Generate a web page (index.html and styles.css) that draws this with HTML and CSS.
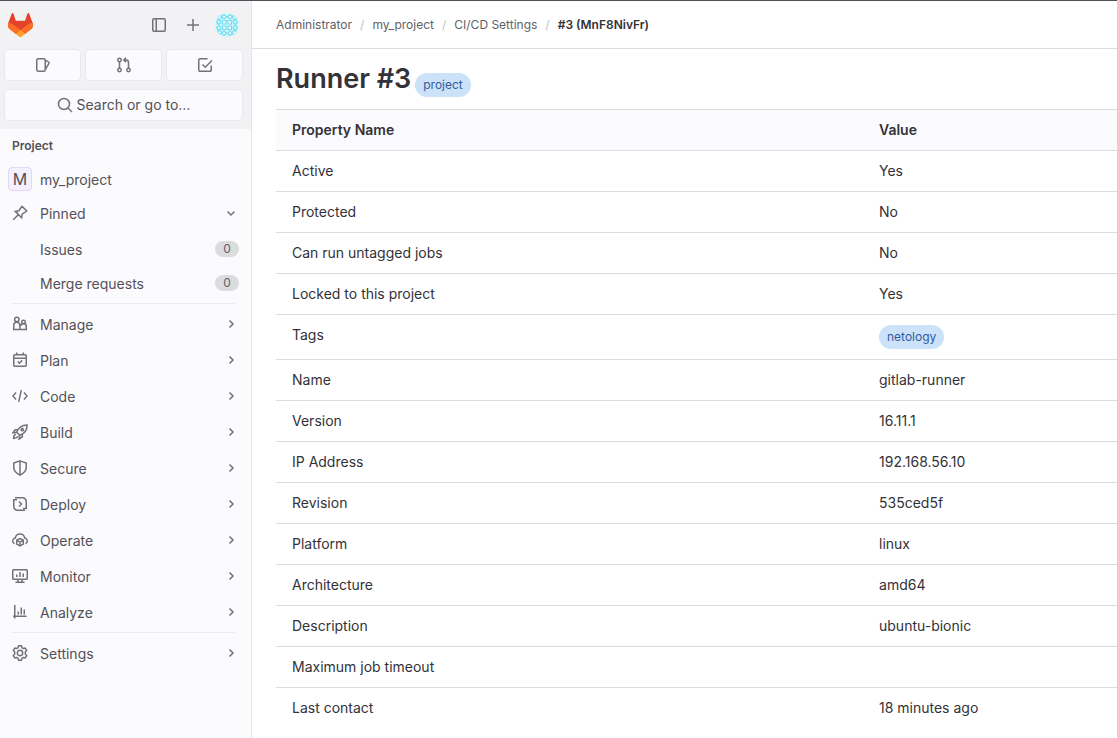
FILE: index.html
```html
<!DOCTYPE html>
<html lang="en">
<head>
<meta charset="utf-8">
<meta name="viewport" content="width=device-width, initial-scale=1">
<title>#3 (MnF8NivFr) · CI/CD Settings · GitLab</title>
<link rel="stylesheet" href="styles.css">
</head>
<body>
<svg class="sprite" aria-hidden="true">
  <symbol id="chevron" viewBox="0 0 16 16"><path d="M6.500 4.500 10 8l-3.500 3.500"/></symbol>
  <symbol id="chevron-down" viewBox="0 0 16 16"><path d="M4.500 6.500 8 10l3.500-3.500"/></symbol>
</svg>
<div class="layout">
  <aside class="sidebar">
    <div class="user-bar">
      <div class="brand-row">
        <a class="logo" href="#" aria-label="Homepage">
          <svg viewBox="0 0 25 24"><path fill="#e24329" d="m24.507 9.500-.034-.09L21.082.562a.896.896 0 0 0-1.694.091l-2.290 7.010H7.825L5.535.653a.898.898 0 0 0-1.694-.09L.451 9.411.416 9.500a6.297 6.297 0 0 0 2.090 7.278l.012.010.030.022 5.160 3.867 2.560 1.935 1.554 1.176a1.051 1.051 0 0 0 1.268 0l1.555-1.176 2.560-1.935 5.197-3.890.014-.010A6.297 6.297 0 0 0 24.507 9.500Z"/><path fill="#fc6d26" d="m24.507 9.500-.034-.09a11.440 11.440 0 0 0-4.560 2.051l-7.447 5.632 4.742 3.584 5.197-3.890.014-.010A6.297 6.297 0 0 0 24.507 9.500Z"/><path fill="#fca326" d="m7.707 20.677 2.560 1.935 1.555 1.176a1.051 1.051 0 0 0 1.268 0l1.555-1.176 2.560-1.935-4.743-3.584-4.755 3.584Z"/><path fill="#fc6d26" d="M5.010 11.461a11.430 11.430 0 0 0-4.560-2.050L.416 9.500a6.297 6.297 0 0 0 2.090 7.278l.012.010.030.022 5.160 3.867 4.745-3.584-7.444-5.632Z"/></svg>
        </a>
        <div class="brand-actions">
          <button type="button" class="plain" aria-label="Hide sidebar"><svg class="icon" viewBox="0 0 16 16"><rect x="1.750" y="1.750" width="12.500" height="12.500" rx="1.200"/><path d="M5.250 2v12"/></svg></button>
          <button type="button" class="plain" aria-label="Create new"><svg class="icon" viewBox="0 0 16 16"><path d="M8 2v12M2 8h12"/></svg></button>
          <button type="button" class="plain" aria-label="User menu">
            <svg class="user-avatar" viewBox="0 0 24 24">
              <defs><clipPath id="round"><circle cx="12" cy="12" r="12"/></clipPath></defs>
              <g clip-path="url(#round)">
                <path fill="#d3f5fa" d="M0 0h24v24H0z"/>
                <g fill="#f4fdfe" stroke="#72def0" stroke-width="1.200">
                  <path d="M7.500 7.500h3.500v3.500H7.500zM13 7.500h3.500v3.500H13zM7.500 13h3.500v3.500H7.500zM13 13h3.500v3.500H13z"/>
                  <path d="m9 1.500 2.500 2.250L9 6 6.500 3.750zM15 1.500l2.500 2.250L15 6l-2.500-2.250zM9 18l2.500 2.250L9 22.500l-2.500-2.250zM15 18l2.500 2.250L15 22.500l-2.500-2.250zM1.500 9l2.250-2.500L6 9l-2.250 2.500zM1.500 15l2.250-2.500L6 15l-2.250 2.500zM18 9l2.250-2.500L22.500 9l-2.250 2.500zM18 15l2.250-2.500L22.500 15l-2.250 2.500z"/>
                  <circle cx="4.500" cy="4.500" r="1.800"/><circle cx="19.500" cy="4.500" r="1.800"/><circle cx="4.500" cy="19.500" r="1.800"/><circle cx="19.500" cy="19.500" r="1.800"/>
                </g>
              </g>
            </svg>
          </button>
        </div>
      </div>
      <div class="counters">
        <a href="#" class="tile" aria-label="Assigned issues"><svg class="icon" viewBox="0 0 16 16"><rect x="1.750" y="1.750" width="8.500" height="12.500" rx="1.500"/><path d="m10.500 3.500 2.600 1.100c.8.300 1.100 1.100.8 1.800l-3.500 6.100"/></svg></a>
        <a href="#" class="tile" aria-label="Merge requests"><svg class="icon" viewBox="0 0 16 16"><circle cx="3.500" cy="3" r="1.700"/><circle cx="3.500" cy="13" r="1.700"/><circle cx="12.500" cy="13" r="1.700"/><path d="M3.500 4.700v6.600M12.500 11.300V5.500a2.500 2.500 0 0 0-2.500-2.500H8M10 .8 7.800 3 10 5.200"/></svg></a>
        <a href="#" class="tile" aria-label="To-Do List"><svg class="icon" viewBox="0 0 16 16"><path d="M10.500 1.750H3A1.250 1.250 0 0 0 1.750 3v10A1.250 1.250 0 0 0 3 14.250h10A1.250 1.250 0 0 0 14.250 13V8.500M5.500 7.500 8.250 10.250 15 3.500"/></svg></a>
      </div>
      <button type="button" class="tile search"><svg class="icon" viewBox="0 0 16 16"><circle cx="7" cy="7" r="5.500"/><path d="m11 11 4 4"/></svg>Search or go to…</button>
    </div>

    <nav class="nav" aria-label="Project navigation">
      <h2 class="nav-title">Project</h2>
      <div class="group compact">
        <a href="#" class="item"><span class="project-avatar">M</span><span class="label">my_project</span></a>
        <button type="button" class="item"><svg class="icon" viewBox="0 0 16 16"><path d="M10 1.300 14.700 6 12 8l-1.800 1.100-.6 3.600-6.300-6.300 3.600-.6L8 4ZM6.300 9.700 1.200 14.800"/></svg><span class="label">Pinned</span><svg class="icon chevron"><use href="#chevron-down"/></svg></button>
      </div>
      <div class="group compact">
        <a href="#" class="item"><span class="icon"></span><span class="label">Issues</span><span class="count">0</span></a>
        <a href="#" class="item"><span class="icon"></span><span class="label">Merge requests</span><span class="count">0</span></a>
      </div>
      <div class="group ruled">
        <button type="button" class="item"><svg class="icon" viewBox="0 0 16 16"><circle cx="4.800" cy="3.500" r="2.200"/><circle cx="11.500" cy="6" r="1.800"/><path d="M8 13.500H1.750V9.300a3 3 0 0 1 6 0ZM8 13.500h6.250v-3a2.700 2.700 0 0 0-5.400-.5"/></svg><span class="label">Manage</span><svg class="icon chevron"><use href="#chevron"/></svg></button>
        <button type="button" class="item"><svg class="icon" viewBox="0 0 16 16"><rect x="1.750" y="2.750" width="12.500" height="11.500" rx="1"/><path d="M2 6.250h12M4.750.5v2M11.250.5v2M5.700 9.500l1.700 1.700 2.800-2.800"/></svg><span class="label">Plan</span><svg class="icon chevron"><use href="#chevron"/></svg></button>
        <button type="button" class="item"><svg class="icon" viewBox="0 0 16 16"><path d="M4 4.500.9 8 4 11.500M12 4.500 15.100 8 12 11.500M9.300 2.200 6.700 13.800"/></svg><span class="label">Code</span><svg class="icon chevron"><use href="#chevron"/></svg></button>
        <button type="button" class="item"><svg class="icon" viewBox="0 0 16 16"><path d="M4.700 8.200C6.300 3.900 9.500.9 15.100.9c0 5.600-3 8.800-7.300 10.400ZM5.800 5.700H3.200L.9 8.900l3.800-.7M10.300 10.200v2.600l-3.200 2.300.7-3.800M3.800 10.200c-1.700.4-2.200 2-2.200 4.200 2.200 0 3.800-.5 4.200-2.200"/><circle cx="10.300" cy="5.700" r="1.100"/></svg><span class="label">Build</span><svg class="icon chevron"><use href="#chevron"/></svg></button>
        <button type="button" class="item"><svg class="icon" viewBox="0 0 16 16"><path d="M8 .9 14.250 3v4.500c0 3.500-2.300 5.700-6.250 7.600-3.950-1.900-6.250-4.100-6.250-7.600V3ZM8 1v14"/></svg><span class="label">Secure</span><svg class="icon chevron"><use href="#chevron"/></svg></button>
        <button type="button" class="item"><svg class="icon" viewBox="0 0 16 16"><path d="M3 1.750h7.500a3.750 3.750 0 0 1 3.750 3.750V12.500H11M13 14.250H5.500A3.750 3.750 0 0 1 1.750 10.500V3.750H5M7 5.500 9.500 8 7 10.500"/></svg><span class="label">Deploy</span><svg class="icon chevron"><use href="#chevron"/></svg></button>
        <button type="button" class="item"><svg class="icon" viewBox="0 0 16 16"><path d="M2.500 11.700A3 3 0 0 1 3.300 6a4.750 4.750 0 0 1 9.400 0 3 3 0 0 1 .8 5.700M8 6.500l3.300 1.800v3.800L8 14l-3.300-1.900V8.300ZM4.800 8.400 8 10.200l3.200-1.800M8 10.200V14"/></svg><span class="label">Operate</span><svg class="icon chevron"><use href="#chevron"/></svg></button>
        <button type="button" class="item"><svg class="icon" viewBox="0 0 16 16"><rect x=".75" y="1.750" width="14.500" height="9.500" rx=".8"/><path d="M4.750 6.500v2.500M8 4v5M11.250 5.500v3.500M6 11.500v2.700M10 11.500v2.700M3.500 14.250h9"/></svg><span class="label">Monitor</span><svg class="icon chevron"><use href="#chevron"/></svg></button>
        <button type="button" class="item"><svg class="icon" viewBox="0 0 16 16"><path d="M2.750 1v13.500M1 12.250h13.500M6.250 7.500v3M9.250 3.500v7M12.250 5.500v5"/></svg><span class="label">Analyze</span><svg class="icon chevron"><use href="#chevron"/></svg></button>
      </div>
      <div class="group ruled">
        <button type="button" class="item"><svg class="icon" viewBox="0 0 16 16"><path d="M6.600.8h2.800l.6 1.900 1.200.7 2-.4 1.500 2.500-1.400 1.500v1.900l1.400 1.600-1.500 2.500-2-.5-1.200.7-.6 2H6.600l-.6-2-1.200-.7-2 .5-1.500-2.500 1.400-1.600V7L1.300 5.500 2.800 3l2 .4L6 2.700Z"/><circle cx="8" cy="8" r="2.700"/></svg><span class="label">Settings</span><svg class="icon chevron"><use href="#chevron"/></svg></button>
      </div>
    </nav>
  </aside>

  <div class="page">
    <nav class="breadcrumbs" aria-label="Breadcrumbs">
      <ol>
        <li><a href="#">Administrator</a></li>
        <li><a href="#">my_project</a></li>
        <li><a href="#">CI/CD Settings</a></li>
        <li><a href="#" aria-current="page">#3 (MnF8NivFr)</a></li>
      </ol>
    </nav>
    <main>
      <div class="heading"><h1>Runner #3</h1><span class="badge">project</span></div>
      <table class="properties">
        <thead><tr><th scope="col" class="name">Property Name</th><th scope="col">Value</th></tr></thead>
        <tbody>
          <tr><td>Active</td><td>Yes</td></tr>
          <tr><td>Protected</td><td>No</td></tr>
          <tr><td>Can run untagged jobs</td><td>No</td></tr>
          <tr><td>Locked to this project</td><td>Yes</td></tr>
          <tr><td>Tags</td><td><span class="badge">netology</span></td></tr>
          <tr><td>Name</td><td>gitlab-runner</td></tr>
          <tr><td>Version</td><td>16.11.1</td></tr>
          <tr><td>IP Address</td><td>192.168.56.10</td></tr>
          <tr><td>Revision</td><td>535ced5f</td></tr>
          <tr><td>Platform</td><td>linux</td></tr>
          <tr><td>Architecture</td><td>amd64</td></tr>
          <tr><td>Description</td><td>ubuntu-bionic</td></tr>
          <tr><td>Maximum job timeout</td><td></td></tr>
          <tr><td>Last contact</td><td>18 minutes ago</td></tr>
        </tbody>
      </table>
    </main>
  </div>
</div>
</body>
</html>
```

FILE: styles.css
```css
* { box-sizing: border-box; }

body {
  margin: 0;
  background: #fff;
  color: #333238;
  font: 14px/20px Inter, "Noto Sans", "Liberation Sans", sans-serif;
}

a { color: inherit; text-decoration: none; }

button {
  margin: 0;
  border: 0;
  padding: 0;
  background: none;
  color: inherit;
  font: inherit;
  cursor: pointer;
}

.sprite { position: absolute; width: 0; height: 0; }

.layout {
  display: flex;
  min-height: 100vh;
  border-top: 1px solid #535158;
}

.icon {
  flex: none;
  display: block;
  width: 16px;
  height: 16px;
  fill: none;
  stroke: #737278;
  stroke-width: 1.5;
}

/* Sidebar */
.sidebar {
  flex: none;
  width: 252px;
  border-right: 1px solid #e7e7ea;
  background: #fbfafd;
  color: #535158;
}

.user-bar {
  display: flex;
  flex-direction: column;
  gap: 8px;
  padding: 8px;
  background: #f2f1f4;
}

.brand-row {
  display: flex;
  align-items: center;
  justify-content: space-between;
  height: 32px;
  padding-right: 4px;
}

.logo svg { display: block; width: 25px; height: 24px; }

.brand-actions { display: flex; align-items: center; gap: 14px; }

.plain { display: block; }
.plain:first-child { margin-right: 4px; }

.user-avatar { display: block; width: 24px; height: 24px; }

.counters { display: flex; gap: 4px; margin: 0 0 0 -4px; }

.tile {
  display: flex;
  flex: 1;
  align-items: center;
  justify-content: center;
  height: 32px;
  border: 1px solid #e9e8ec;
  border-radius: 4px;
  background: #fbfafd;
}

.search {
  flex: none;
  gap: 4px;
  margin: 0 0 0 -4px;
}

.nav { padding: 8px; }

.nav-title {
  margin: 0 0 4px;
  padding: 0 4px;
  font-size: 12px;
  font-weight: 600;
  line-height: 18px;
}

.group { display: flex; flex-direction: column; gap: 4px; }
.compact { gap: 2px; padding-top: 4px; }

.ruled { padding-top: 8px; }
.ruled::before {
  content: "";
  height: 1px;
  margin: -4px 8px 0 4px;
  background: #ececef;
}

.item {
  display: flex;
  align-items: center;
  gap: 12px;
  width: 100%;
  height: 32px;
  padding: 0 4px;
  text-align: left;
}

.label { flex: 1; padding-top: 2px; }

.project-avatar {
  width: 24px;
  height: 24px;
  margin: 0 -4px;
  border: 1px solid #e1d8f9;
  border-radius: 4px;
  background: #f4f0ff;
  font-size: 16px;
  line-height: 22px;
  text-align: center;
}

.count {
  min-width: 24px;
  padding: 0 8px;
  border-radius: 8px;
  background: #dcdcde;
  color: #626168;
  font-size: 12px;
  line-height: 16px;
  text-align: center;
}

/* Page */
.page { flex: 1; min-width: 0; }

.breadcrumbs {
  height: 48px;
  padding: 0 24px;
  border-bottom: 1px solid #dcdcde;
  color: #626168;
  font-size: 12px;
  line-height: 16px;
}

.breadcrumbs ol {
  display: flex;
  align-items: center;
  height: 100%;
  margin: 0;
  padding: 0;
  list-style: none;
}

.breadcrumbs li + li::before {
  content: "/";
  padding: 0 8px;
  color: #bfbfc3;
}

.breadcrumbs [aria-current] { color: #333238; font-weight: 600; }

main { padding: 12px 0 8px 24px; }

.heading {
  display: flex;
  align-items: flex-end;
  gap: 4px;
  padding-bottom: 12px;
}

h1 {
  margin: 0;
  font-size: 27px;
  font-weight: 600;
  line-height: 36px;
}

.badge {
  display: block;
  width: fit-content;
  padding: 4px 8px;
  border-radius: 12px;
  background: #cbe2f9;
  color: #2f5ca0;
  font-size: 12px;
  line-height: 16px;
}

.properties {
  width: 100%;
  table-layout: fixed;
  border-spacing: 0;
}

.properties th,
.properties td {
  height: 41px;
  padding: 10px 16px;
  border-top: 1px solid #dcdcde;
  text-align: left;
  vertical-align: top;
}

.properties th { background: #fbfafd; font-weight: 600; }
.properties .name { width: 69.8%; }
```
